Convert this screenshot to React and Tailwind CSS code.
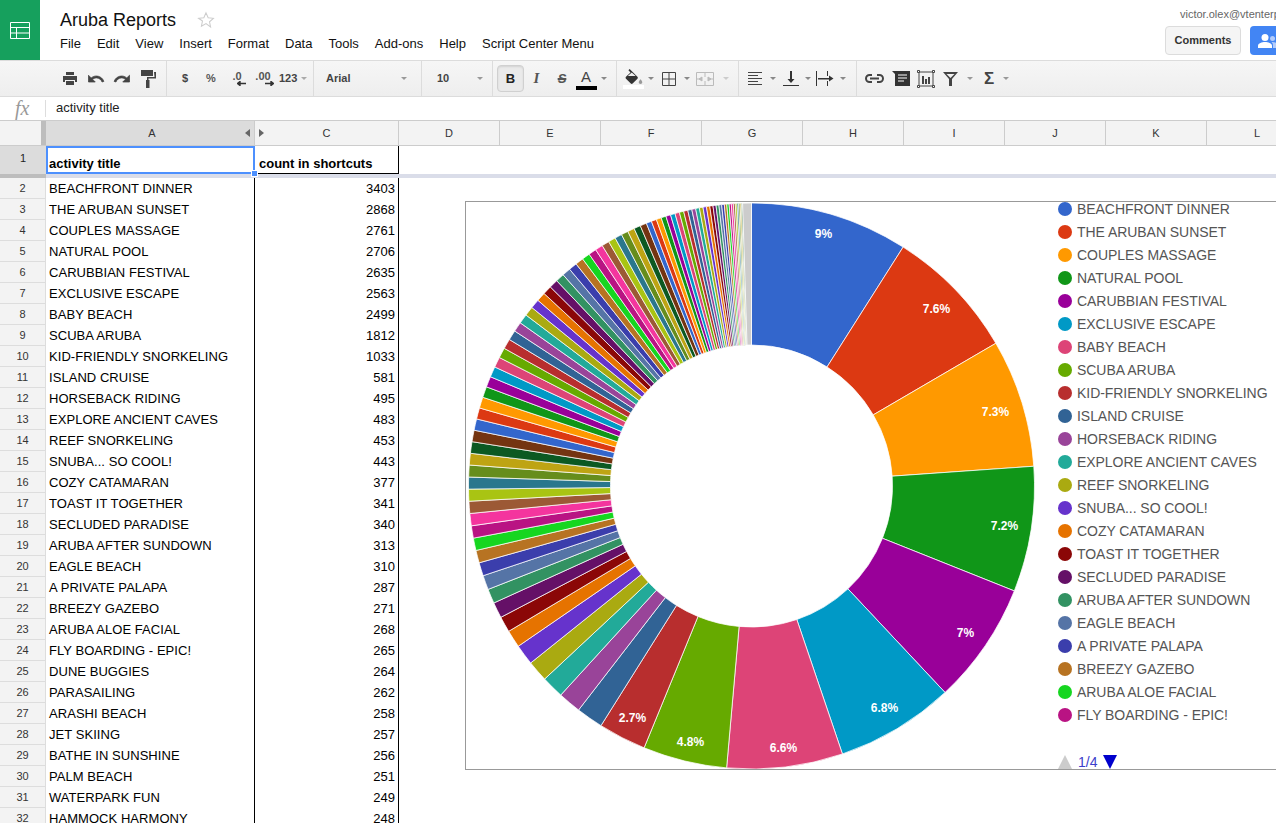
import React from "react";

const F = "font-['Liberation_Sans',Arial,sans-serif]";
const rows = [
  ["BEACHFRONT DINNER",3403],["THE ARUBAN SUNSET",2868],["COUPLES MASSAGE",2761],["NATURAL POOL",2706],["CARUBBIAN FESTIVAL",2635],["EXCLUSIVE ESCAPE",2563],["BABY BEACH",2499],["SCUBA ARUBA",1812],["KID-FRIENDLY SNORKELING",1033],["ISLAND CRUISE",581],["HORSEBACK RIDING",495],["EXPLORE ANCIENT CAVES",483],["REEF SNORKELING",453],["SNUBA... SO COOL!",443],["COZY CATAMARAN",377],["TOAST IT TOGETHER",341],["SECLUDED PARADISE",340],["ARUBA AFTER SUNDOWN",313],["EAGLE BEACH",310],["A PRIVATE PALAPA",287],["BREEZY GAZEBO",271],["ARUBA ALOE FACIAL",268],["FLY BOARDING - EPIC!",265],["DUNE BUGGIES",264],["PARASAILING",262],["ARASHI BEACH",258],["JET SKIING",257],["BATHE IN SUNSHINE",256],["PALM BEACH",251],["WATERPARK FUN",249],["HAMMOCK HARMONY",248],
];
const palette = ["#3366cc","#dc3912","#ff9900","#109618","#990099","#0099c6","#dd4477","#66aa00","#b82e2e","#316395","#994499","#22aa99","#aaaa11","#6633cc","#e67300","#8b0707","#651067","#329262","#5574a6","#3b3eac","#b77322","#16d620","#b91383","#f4359e","#9c5935","#a9c413","#2a778d","#668d1c","#bea413","#0c5922","#743411"];

const values = rows.map((r) => r[1]);
for (let i = 0; i < 31; i++) values.push(245 - (i * 105) / 30);
for (let i = 0; i < 30; i++) values.push(115 - (i * 90) / 29);
const total = values.reduce((a, b) => a + b, 0) + 190;

function slices() {
  const cx = 285.5, cy = 284, R = 283, r = 141;
  let a = 0;
  const out = [];
  const pt = (rad, ang) => [cx + rad * Math.sin(ang), cy - rad * Math.cos(ang)];
  const make = (v, color, key) => {
    const b = a + (v / total) * Math.PI * 2;
    const [x1, y1] = pt(R, a), [x2, y2] = pt(R, b), [x3, y3] = pt(r, b), [x4, y4] = pt(r, a);
    out.push(<path key={key} d={`M${x1} ${y1}A${R} ${R} 0 0 1 ${x2} ${y2}L${x3} ${y3}A${r} ${r} 0 0 0 ${x4} ${y4}Z`} fill={color} stroke="#fff" strokeWidth="0.75" />);
    a = b;
  };
  values.forEach((v, i) => make(v, palette[i % 31], i));
  make(190, "#cccccc", "other");
  return out;
}

const labels = [["9%",823,233],["7.6%",936,308],["7.3%",995,411],["7.2%",1004,525],["7%",965,632],["6.8%",884,707],["6.6%",783,747],["4.8%",690,741],["2.7%",632,717]];

function Caret({ color = "#888" }) {
  return <svg width="6" height="3" viewBox="0 0 6 3" className="shrink-0"><path d="M0 0h6L3 3z" fill={color} /></svg>;
}

function Icon({ w, children }) {
  return <div className="flex items-center justify-center shrink-0" style={{ width: w }}>{children}</div>;
}

function Group({ width, pl, children }) {
  return <div className="flex items-center h-full shrink-0 border-r border-[#dcdcdc]" style={{ width, paddingLeft: pl }}>{children}</div>;
}

const undoD = "M12.5 8c-2.65 0-5.05.99-6.9 2.6L2 7v9h9l-3.62-3.62c1.39-1.16 3.16-1.88 5.12-1.88 3.54 0 6.55 2.31 7.6 5.5l2.37-.78C21.08 11.03 17.15 8 12.5 8z";

function Toolbar() {
  return (
    <div className={`flex h-[37px] border-y border-[#dcdcdc] bg-gradient-to-b from-[#f6f6f6] to-[#eeeeee] text-[#444] ${F}`}>
      <Group width={167} pl={57}>
        <Icon w={26}>
          <svg width="14" height="13" viewBox="0 0 14 13" fill="#444"><path d="M3 0h8v3H3z" /><path d="M0 4h14v6h-2V8H2v2H0z" /><path d="M3 9h8v4H3z" /></svg>
        </Icon>
        <Icon w={26}><svg width="18" height="18" viewBox="0 0 24 24" fill="#444" stroke="#444"><path d={undoD} /></svg></Icon>
        <Icon w={26}><svg width="18" height="18" viewBox="0 0 24 24" fill="#444" stroke="#444" className="-scale-x-100"><path d={undoD} /></svg></Icon>
        <Icon w={26}>
          <svg width="15" height="18" viewBox="0 0 15 18" fill="#444"><path d="M0 0h12v6H0z" /><path d="M13 2h2v6.5H7.5V11h-1.5V7h7.5z" /><path d="M5 10h3.5v8H5z" /></svg>
        </Icon>
      </Group>
      <Group width={147} pl={5}>
        <Icon w={26}><span className="text-[11px] font-bold text-[#444]">$</span></Icon>
        <Icon w={26}><span className="text-[11px] font-bold text-[#555]">%</span></Icon>
        <Icon w={26}>
          <div className="flex flex-col items-center">
            <span className="text-[11px] font-bold leading-[11px] text-[#555]">.0</span>
            <svg width="9" height="5" viewBox="0 0 9 5" className="ml-[8px] -mt-[1px]"><path d="M9 2.5H3M3 0.5L0.5 2.5 3 4.5z" stroke="#333" strokeWidth="1.4" fill="#333" /></svg>
          </div>
        </Icon>
        <Icon w={26}>
          <div className="flex flex-col items-center">
            <span className="text-[11px] font-bold leading-[11px] text-[#555]">.00</span>
            <svg width="9" height="5" viewBox="0 0 9 5" className="ml-[12px] -mt-[1px]"><path d="M0 2.5H6M6 0.5L8.5 2.5 6 4.5z" stroke="#333" strokeWidth="1.4" fill="#333" /></svg>
          </div>
        </Icon>
        <span className="text-[11px] font-bold ml-[3px] text-[#444]">123</span>
        <span className="ml-[4px]"><Caret color="#aaa" /></span>
      </Group>
      <Group width={108} pl={12}>
        <span className="text-[11px] font-bold text-[#444] w-[75px]">Arial</span>
        <Caret color="#999" />
      </Group>
      <Group width={71} pl={15}>
        <span className="text-[11px] font-bold text-[#444] w-[40px]">10</span>
        <Caret color="#999" />
      </Group>
      <Group width={124} pl={4}>
        <div className="w-[27px] h-[27px] flex items-center justify-center bg-[#eaeaea] border border-[#d0d0d0] rounded-sm shadow-[inset_0_1px_2px_rgba(0,0,0,0.1)] shrink-0">
          <span className="text-[13px] font-black text-[#222]">B</span>
        </div>
        <Icon w={25}><span className="text-[15px] font-bold italic text-[#555] font-['Liberation_Serif',serif]">I</span></Icon>
        <Icon w={26}><span className="text-[13px] font-bold italic line-through decoration-[1.5px] text-[#555]">S</span></Icon>
        <div className="flex flex-col items-center w-[22px] shrink-0 mt-[1px]">
          <span className="text-[15px] leading-[15px] text-[#444]">A</span>
          <div className="w-[21px] h-[4px] bg-black mt-[2px]" />
        </div>
        <span className="ml-[4px]"><Caret /></span>
      </Group>
      <Group width={122} pl={5}>
        <div className="flex flex-col items-center w-[22px] shrink-0 mt-[1px]">
          <svg width="21" height="15" viewBox="0 0 24 17"><path d="M7.6 0L6.2 1.4l2.4 2.4-5.2 5.1c-.6.6-.6 1.5 0 2.1l5.5 5.5c.6.6 1.5.6 2.1 0l5.5-5.5c.6-.6.6-1.5 0-2.1z" fill="#333" /><path d="M5.5 8L10 4l4.5 4z" fill="#eee" /><path d="M20 11.5s-2 2.2-2 3.5c0 1.1.9 2 2 2s2-.9 2-2c0-1.3-2-3.5-2-3.5z" fill="#999" /></svg>
          <div className="w-[21px] h-[4px] bg-white mt-[1px]" />
        </div>
        <span className="ml-[4px]"><Caret /></span>
        <svg width="14" height="14" viewBox="0 0 14 14" fill="none" stroke="#444" className="ml-[8px] shrink-0"><path d="M.5.5h13v13H.5zM7 0v14M0 7h14" /></svg>
        <span className="ml-[8px]"><Caret /></span>
        <svg width="18" height="14" viewBox="0 0 18 14" fill="none" stroke="#bbb" className="ml-[6px] shrink-0"><path d="M.5.5h17v13H.5zM9 0v5M9 9v5M0 7h6M18 7h-6" /><path d="M3 7l3-2v4zM15 7l-3-2v4z" fill="#bbb" /></svg>
        <span className="ml-[9px]"><Caret color="#ccc" /></span>
      </Group>
      <Group width={118} pl={9}>
        <svg width="15" height="13" viewBox="0 0 15 13" stroke="#444" className="shrink-0"><path d="M0 .5h14M0 3.5h10M0 6.5h14M0 9.5h10M0 12.5h14" /></svg>
        <span className="ml-[7px]"><Caret /></span>
        <svg width="16" height="15" viewBox="0 0 16 15" fill="#333" className="ml-[7px] shrink-0"><path d="M7 0h2v8h2.5L8 12 4.5 8H7z" /><path d="M0 14h16v1H0z" /></svg>
        <span className="ml-[6px]"><Caret /></span>
        <svg width="18" height="15" viewBox="0 0 18 15" fill="#333" className="ml-[5px] shrink-0"><path d="M0 0h1v15H0zM11 0h1v5h-1zM11 10h1v5h-1zM2 7h11V4.5l4.5 3-4.5 3V8.5H2z" /></svg>
        <span className="ml-[6px]"><Caret /></span>
      </Group>
      <div className="flex items-center h-full pl-[8px]">
        <svg width="19" height="9" viewBox="0 0 19 9" fill="none" stroke="#444" strokeWidth="2" className="shrink-0"><path d="M7 1H4.500a3.500 3.500 0 0 0 0 7H7M12 1h2.500a3.500 3.500 0 0 1 0 7H12M5 4.500h9" /></svg>
        <svg width="18" height="15" viewBox="0 0 18 15" className="ml-[8px] shrink-0"><path d="M0 0h18v15H3V3z" fill="#333" /><path d="M6 4h9M6 7h9M6 10h6" stroke="#fff" /></svg>
        <svg width="18" height="18" viewBox="0 0 18 18" fill="none" stroke="#444" className="ml-[7px] shrink-0"><path d="M2 2h14v14H2z" /><path d="M.5.5h2v2h-2zM15.5.5h2v2h-2zM.5 15.5h2v2h-2zM15.5 15.5h2v2h-2z" fill="#fff" /><path d="M5 6h2v8H5zM8 9h2v5H8zM11 7h2v7h-2z" fill="#444" stroke="none" /></svg>
        <svg width="15" height="14" viewBox="0 0 15 14" className="ml-[8px] shrink-0"><path d="M0 0h15L9 7v7H6V7zM3.500 2L7.500 6 11.500 2z" fill="#444" fillRule="evenodd" /></svg>
        <span className="ml-[9px]"><Caret color="#999" /></span>
        <span className="ml-[11px] text-[17px] leading-[17px] font-bold text-[#444]">Σ</span>
        <span className="ml-[9px]"><Caret color="#999" /></span>
      </div>
    </div>
  );
}

const cols = ["D","E","F","G","H","I","J","K","L"];

function Tri({ dir }) {
  return <svg width="5" height="8" viewBox="0 0 5 8" className="shrink-0"><path d={dir === "l" ? "M5 0v8L0 4z" : "M0 0v8l5-4z"} fill="#666" /></svg>;
}

function App() {
  return (
    <div className={`relative w-[1276px] h-[823px] overflow-hidden bg-white text-black ${F}`}>
      {/* title bar */}
      <div className="flex h-[60px]">
        <div className="w-[40px] h-full bg-[#16a05d] flex items-center justify-center shrink-0">
          <svg width="20" height="17" viewBox="0 0 20 17" fill="none" stroke="#fff"><path d="M.5.5h19v16H.5zM0 5.500h20M0 11h20M6.500 5.500V17" /></svg>
        </div>
        <div className="flex-1 pl-[20px] relative">
          <div className="flex items-center h-[18px] mt-[11px]">
            <span className="text-[18px] leading-[18px] text-[#111]">Aruba Reports</span>
            <svg width="18" height="18" viewBox="0 0 24 24" fill="none" stroke="#ccc" strokeWidth="1.4" className="ml-[21px]"><path d="M12 2.500l2.900 6.400 7 .8-5.200 4.700 1.400 6.900L12 16.800l-6.100 3.500 1.400-6.900L2.100 9.700l7-.8z" /></svg>
          </div>
          <div className="flex gap-4 mt-[7px] text-[13px] leading-[16px] text-[#111]">
            {["File","Edit","View","Insert","Format","Data","Tools","Add-ons","Help","Script Center Menu"].map((m) => <span key={m}>{m}</span>)}
          </div>
        </div>
        <div className="absolute left-[1165px] top-0 w-[200px]">
          <div className="pl-[15px] pt-[8px] text-[11px] leading-[13px] text-[#666] whitespace-nowrap">victor.olex@vtenterprises.com</div>
          <div className="flex mt-[5px] gap-[9px]">
            <div className="w-[76px] h-[29px] flex items-center justify-center bg-[#f5f5f5] border border-[#dcdcdc] rounded-sm text-[11px] font-bold text-[#333]">Comments</div>
            <div className="w-[60px] h-[29px] flex items-center pl-[8px] bg-[#4285f4] rounded-sm">
              <svg width="20" height="14" viewBox="0 0 20 14" fill="#fff"><circle cx="7" cy="3.500" r="3.500" /><path d="M0 14v-2.500C0 9.500 4 8 7 8s7 1.500 7 3.500V14z" /><circle cx="14.500" cy="4.500" r="2.500" fill="#b3ccfb" /><path d="M15 14v-3c0-1-.5-2-1.500-3 3-.3 6.500 1 6.500 3v3z" fill="#b3ccfb" /></svg>
            </div>
          </div>
        </div>
      </div>

      <Toolbar />

      {/* formula bar */}
      <div className="flex items-center h-[24px] border-b border-[#ccc]">
        <span className="w-[46px] pl-[15px] text-[20px] italic text-[#999] font-['Liberation_Serif',serif] border-r border-[#ddd] h-[17px] leading-[17px] shrink-0">fx</span>
        <span className="pl-[10px] text-[13px] leading-[16px] -mt-[2px] text-[#222]">activity title</span>
      </div>

      {/* column headers */}
      <div className="flex h-[25px] border-b border-[#ccc] text-[11px] text-[#333]">
        <div className="w-[46px] shrink-0 bg-[#f3f3f3] flex justify-end">
          <div className="w-[5px] h-full bg-[#bdbdbd]" />
        </div>
        <div className="w-[209px] shrink-0 bg-[#dcdcdc] border-r border-[#ccc] flex items-center pl-[13px] pr-[4px]">
          <span className="flex-1 text-center">A</span>
          <Tri dir="l" />
        </div>
        <div className="w-[144px] shrink-0 bg-[#f3f3f3] border-r border-[#ccc] flex items-center pl-[4px] pr-[9px]">
          <Tri dir="r" />
          <span className="flex-1 text-center">C</span>
        </div>
        {cols.map((c) => (
          <div key={c} className="w-[101px] shrink-0 bg-[#f3f3f3] border-r border-[#ccc] flex items-center justify-center">{c}</div>
        ))}
      </div>

      {/* row 1 */}
      <div className="flex h-[28px]">
        <div className="w-[46px] shrink-0 bg-[#dcdcdc] flex items-center justify-center pb-[3px] text-[11px] text-[#222]">1</div>
        <div className="relative w-[209px] shrink-0 border-2 border-[#4d90fe] flex items-end pl-[1px] pb-[1px] text-[13px] leading-[15px] font-bold">
          activity title
          <div className="absolute right-[-5px] bottom-[-5px] w-[7px] h-[7px] bg-[#4d90fe] border border-white" />
        </div>
        <div className="w-[144px] shrink-0 border-r border-b border-black flex items-end pl-[4px] pb-[2px] text-[13px] leading-[15px] font-bold">count in shortcuts</div>
      </div>
      {/* freeze bar */}
      <div className="flex h-[4px]">
        <div className="w-[46px] bg-[#bdbdbd] shrink-0" />
        <div className="flex-1 bg-[#dadde9]" />
      </div>

      {/* rows */}
      <div>
        {rows.map(([name, v], i) => (
          <div key={name} className="flex h-[21px]">
            <div className="w-[46px] shrink-0 bg-[#f3f3f3] border-b border-r border-[#ddd] flex items-center justify-center text-[11px] text-[#333]">{i + 2}</div>
            <div className="w-[209px] shrink-0 border-r border-black flex items-center pl-[3px] text-[13px] tracking-[0.05px] whitespace-nowrap overflow-hidden">{name}</div>
            <div className="w-[144px] shrink-0 border-r border-black flex items-center justify-end pr-[3px] text-[13px]">{v}</div>
          </div>
        ))}
      </div>

      {/* chart panel */}
      <div className="absolute left-[465px] top-[201px] w-[900px] h-[569px] border border-[#999] bg-white flex">
        <svg width="575" height="567" viewBox="0 0 575 567" className="shrink-0">
          {slices()}
          {labels.map(([t, x, y]) => (
            <text key={t} x={x - 465.5} y={y - 202 + 4.5} textAnchor="middle" fontSize="12" fontWeight="700" fill="#fff" fontFamily="'Liberation Sans', Arial, sans-serif">{t}</text>
          ))}
        </svg>
        <div className="ml-[17px] flex flex-col">
          <div className="flex flex-col gap-[9px]">
            {rows.slice(0, 23).map(([name], i) => (
              <div key={name} className="flex items-center h-[14px] whitespace-nowrap">
                <span className="w-[14px] h-[14px] rounded-full shrink-0" style={{ backgroundColor: palette[i] }} />
                <span className="ml-[5px] text-[14px] leading-[14px] tracking-[-0.05px] text-[#555]">{name}</span>
              </div>
            ))}
          </div>
          <div className="flex items-center mt-[33px] h-[14px]">
            <svg width="14" height="14" viewBox="0 0 14 14"><path d="M7 0l7 14H0z" fill="#ccc" /></svg>
            <span className="ml-[6px] text-[14px] leading-[14px] text-[#3b3ecc]">1/4</span>
            <svg width="14" height="14" viewBox="0 0 14 14" className="ml-[6px]"><path d="M0 0h14L7 14z" fill="#0000cc" /></svg>
          </div>
        </div>
      </div>
    </div>
  );
}

export default App;
